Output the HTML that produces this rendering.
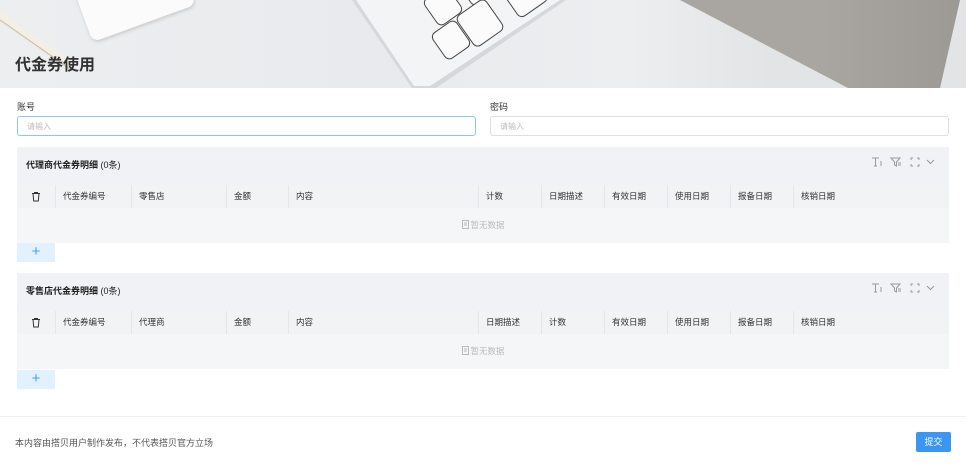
<!DOCTYPE html>
<html><head><meta charset="utf-8"><style>
*{margin:0;padding:0;box-sizing:border-box}
body{width:966px;height:467px;overflow:hidden;background:#fff;font-family:"Liberation Sans","Noto Sans CJK SC",sans-serif;position:relative;color:#333}
.abs{position:absolute}
.hero{left:0;top:0;width:966px;height:88px;background:linear-gradient(90deg,#eceef0 0%,#e8eaed 40%,#eceef0 65%,#e2e4e6 80%);overflow:hidden}
.key{position:absolute;background:#fbfbfc;border:1.5px solid #444;border-radius:6px;width:30px;height:32px;transform:rotate(-35deg)}
.title{left:15px;top:51px;font-size:16px;font-weight:bold;color:#333}
.lbl{font-size:9px;color:#333;line-height:10px}
.inp{height:20px;border:1px solid #dcdfe6;border-radius:3px;font-size:8px;color:#bbb;padding:5px 9px;line-height:9px}
.card{left:17px;width:932px;background:#f5f6f8}
.bar{height:38px;background:#f0f2f6;font-size:9px;font-weight:bold;color:#222;padding:11px 9px}
.bar span{font-weight:normal}
.th{height:23px;background:#f2f3f5;position:relative;font-size:8.5px;color:#333}
.th div{position:absolute;top:0;height:23px;line-height:23px;border-left:1px solid #e4e6ea;padding-left:7px}
.empty{height:35px;text-align:center;line-height:35px;font-size:8.5px;color:#bbb}
.plus{width:38px;height:19px;background:#e1f1fd;color:#4aa3e8;text-align:center;font-size:15px;line-height:18px}
.icons{right:14px;top:9px}
</style></head><body>
<div class="abs hero">
 <div class="abs" style="left:0;top:0;width:966px;height:88px;background:#a9a6a1;clip-path:polygon(680px 0,960px 0,940px 88px,848px 88px)"></div>
 <div class="abs" style="left:0;top:0;width:966px;height:88px;background:linear-gradient(90deg,transparent 85%,rgba(0,0,0,.08));clip-path:polygon(680px 0,960px 0,940px 88px,848px 88px)"></div>
 <div class="abs" style="left:0;top:0;width:966px;height:88px;background:#d5d8db;clip-path:polygon(352px 0,566px 0,436px 88px,412px 88px)"></div>
 <div class="abs" style="left:0;top:0;width:966px;height:88px;background:#f3f4f6;clip-path:polygon(356px 0,560px 0,430px 86px,414px 86px)"></div>
 <div class="key" style="left:428px;top:-10px"></div>
 <div class="key" style="left:462px;top:-30px"></div>
 <div class="key" style="left:436px;top:24px"></div>
 <div class="key" style="left:462px;top:4px;width:36px;height:38px"></div>
 <div class="key" style="left:508px;top:-20px;width:36px"></div>
 <div class="abs" style="left:80px;top:-30px;width:110px;height:55px;background:#fbfbfc;border-radius:8px;transform:rotate(-20deg);box-shadow:0 2px 3px #ccc"></div>
 <div class="abs" style="left:-10px;top:36px;width:90px;height:7px;background:#f4efe6;transform:rotate(35deg);box-shadow:0 1px 1px #c9b98f"></div>
</div>
<div class="abs title">代金券使用</div>
<div class="abs lbl" style="left:17px;top:102px">账号</div>
<div class="abs lbl" style="left:490px;top:102px">密码</div>
<div class="abs inp" style="left:17px;top:116px;width:459px;border-color:#8cc6f7">请输入</div>
<div class="abs inp" style="left:490px;top:116px;width:459px">请输入</div>

<svg width="0" height="0" style="position:absolute"><defs>
<g id="tb" fill="none" stroke="#999" stroke-width="1">
 <path d="M1 2h7M4.5 2v8M3 10h3M10 5v5"/>
 <path d="M20 2h9l-3.5 4v4l-2 -1v-3z M27 7h3M27 9h3"/>
 <path d="M40 4v-2h2M46 2h2v2M48 8v2h-2M42 10h-2v-2"/>
 <path d="M56 4l3.5 3.5 3.5-3.5"/>
</g>
<g id="tr" fill="none" stroke="#333" stroke-width="1"><path d="M1 2.5h8M3.5 2.5v-1h3v1M2 2.5l.7 7.5h4.6l.7-7.5"/></g>
<g id="em" fill="none" stroke="#bbb" stroke-width="1"><path d="M1.5 1.5h6v8h-6z M3 4h3M3 6h3"/></g>
</defs></svg>

<div class="abs card" style="top:147px">
 <div class="bar">代理商代金券明细 <span>(0条)</span></div>
 <svg class="abs icons" width="64" height="12"><use href="#tb"/></svg>
 <div class="th">
  <div style="left:0;border:none;padding-left:14px"><svg width="10" height="11" style="margin-top:6px"><use href="#tr"/></svg></div>
  <div style="left:38px">代金券编号</div><div style="left:114px">零售店</div><div style="left:209px">金额</div><div style="left:271px">内容</div><div style="left:461px">计数</div><div style="left:524px">日期描述</div><div style="left:587px">有效日期</div><div style="left:650px">使用日期</div><div style="left:713px">报备日期</div><div style="left:776px">核销日期</div>
 </div>
 <div class="empty"><svg width="9" height="11" style="vertical-align:-2px"><use href="#em"/></svg>暂无数据</div>
</div>
<div class="abs plus" style="left:17px;top:243px">+</div>

<div class="abs card" style="top:273px">
 <div class="bar">零售店代金券明细 <span>(0条)</span></div>
 <svg class="abs icons" width="64" height="12"><use href="#tb"/></svg>
 <div class="th">
  <div style="left:0;border:none;padding-left:14px"><svg width="10" height="11" style="margin-top:6px"><use href="#tr"/></svg></div>
  <div style="left:38px">代金券编号</div><div style="left:114px">代理商</div><div style="left:209px">金额</div><div style="left:271px">内容</div><div style="left:461px">日期描述</div><div style="left:524px">计数</div><div style="left:587px">有效日期</div><div style="left:650px">使用日期</div><div style="left:713px">报备日期</div><div style="left:776px">核销日期</div>
 </div>
 <div class="empty"><svg width="9" height="11" style="vertical-align:-2px"><use href="#em"/></svg>暂无数据</div>
</div>
<div class="abs plus" style="left:17px;top:370px">+</div>

<div class="abs" style="left:0;top:416px;width:966px;height:1px;background:#eee"></div>
<div class="abs" style="left:15px;top:436px;font-size:9px;color:#555">本内容由搭贝用户制作发布，不代表搭贝官方立场</div>
<div class="abs" style="left:916px;top:432px;width:35px;height:20px;background:#3a96f0;border-radius:2px;color:#fff;font-size:9px;text-align:center;line-height:20px">提交</div>
</body></html>
